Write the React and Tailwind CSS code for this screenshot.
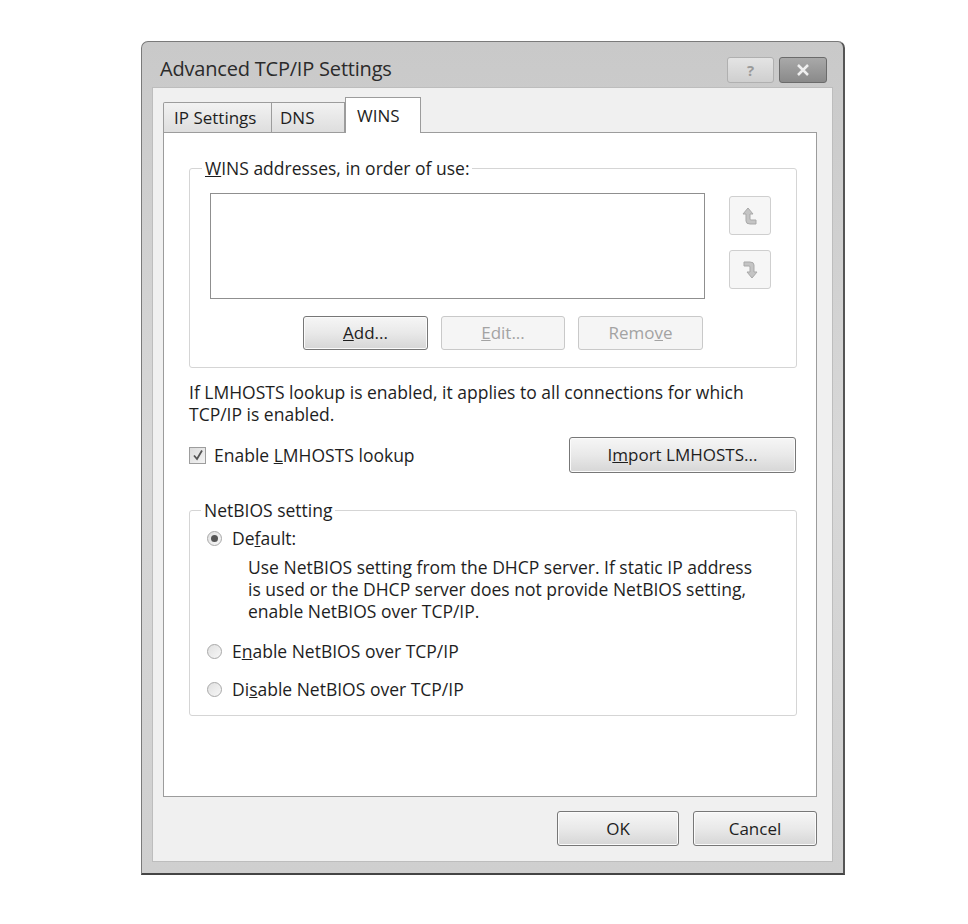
import React from 'react'

const font = { fontFamily: '"Open Sans", "Noto Sans", sans-serif' }

const Btn = ({ children, disabled, className = '' }) => (
  <div
    className={
      'flex items-center justify-center rounded-[3px] border text-[17px] ' +
      (disabled
        ? 'border-[#c9c9c9] bg-[#f5f5f5] text-[#a3a3a3] '
        : 'border-[#777] bg-gradient-to-b from-[#f6f6f6] via-[#e9e9e9] to-[#d6d6d6] text-[#1e1e1e] shadow-[inset_0_0_0_1px_#fbfbfb] ') +
      className
    }
  >
    {children}
  </div>
)

const ArrowBtn = ({ down }) => (
  <div className="w-[42px] h-[39px] rounded-[3px] border border-[#cfcfcf] bg-[#f6f6f6] flex items-center justify-center">
    <svg width="18" height="22" viewBox="0 0 18 22" className={down ? 'rotate-180' : ''}>
      <path d="M7 3 L2 9 H5 V16 Q5 19 9 19 H15 V15 H10 Q9 15 9 14 V9 H12 Z" fill="#c4c4c4" stroke="#a9a9a9" strokeWidth="1" />
    </svg>
  </div>
)

const Radio = ({ checked }) => (
  <div className="w-[15px] h-[15px] rounded-full border border-[#a8a8a8] bg-gradient-to-br from-[#e0e0e0] to-[#f7f7f7] flex items-center justify-center">
    {checked && <div className="w-[7px] h-[7px] rounded-full bg-[#555]" />}
  </div>
)

const App = () => {
  return (
    <div className="min-h-screen bg-white pt-[41px] pl-[141px]" style={font}>
      <div className="w-[704px] h-[834px] flex flex-col rounded-t-[7px] border border-[#7a7a7a] border-r-[2px] border-b-[2px] border-r-[#555] border-b-[#444] bg-gradient-to-b from-[#c9c9c9] via-[#d8d8d8] to-[#cfcfcf]">
        {/* Title bar */}
        <div className="h-[46px] flex items-start pl-[18px] pr-[16px]">
          <div className="flex-1 text-[20px] tracking-[-0.2px] text-[#2b2b2b] pt-[13px] leading-[28px]">Advanced TCP/IP Settings</div>
          <div className="flex gap-[5px] pt-[15px]">
            <div className="w-[47px] h-[26px] rounded-[3px] border border-[#b0b0b0] bg-gradient-to-b from-[#e4e4e4] to-[#cfcfcf] flex items-center justify-center text-[15px] font-bold text-[#9a9a9a]">?</div>
            <div className="w-[48px] h-[26px] rounded-[3px] border border-[#6b6b6b] bg-gradient-to-b from-[#a9a9a9] to-[#8a8a8a] flex items-center justify-center">
              <svg width="14" height="12" viewBox="0 0 14 12">
                <path d="M2 1 L12 11 M12 1 L2 11" stroke="#efefef" strokeWidth="2.5" />
              </svg>
            </div>
          </div>
        </div>

        {/* Client area */}
        <div className="flex-1 mx-[10px] mb-[11px] bg-[#f0f0f0] border border-[#bdbdbd] flex flex-col pl-[10px] pr-[15px] pt-[8px] pb-[15px]">
          {/* Tabs */}
          <div className="flex items-end h-[36px] text-[17px] text-[#1e1e1e]">
            <div className="h-[30px] w-[109px] border border-b-0 border-[#9c9c9c] bg-gradient-to-b from-[#f2f2f2] to-[#dedede] flex items-center pl-[10px] rounded-tl-[2px]">IP Settings</div>
            <div className="h-[30px] w-[73px] border border-l-0 border-b-0 border-[#9c9c9c] bg-gradient-to-b from-[#f2f2f2] to-[#dedede] flex items-center pl-[8px]">DNS</div>
            <div className="h-[36px] w-[76px] border border-b-0 border-[#9c9c9c] bg-white flex items-start pt-[5px] pl-[11px] -mb-px relative z-10">WINS</div>
          </div>

          {/* Tab panel */}
          <div className="h-[665px] bg-white border border-[#9c9c9c] pl-[25px] pr-[19px] pt-[23px] text-[17.5px] text-[#1e1e1e]">
            <fieldset className="border border-[#d5d5d5] rounded-[3px] px-[20px] h-[212px]">
              <legend className="px-[3px] ml-[-8px] leading-[24px]">
                <u>W</u>INS addresses, in order of use:
              </legend>
              <div className="flex pt-[13px]">
                <div className="flex flex-col">
                  <div className="w-[495px] h-[106px] border border-[#8f8f8f] bg-white" />
                  <div className="flex justify-end gap-[13px] mt-[17px] mr-[2px]">
                    <Btn className="w-[125px] h-[34px]"><span><u>A</u>dd...</span></Btn>
                    <Btn disabled className="w-[124px] h-[34px]"><span><u>E</u>dit...</span></Btn>
                    <Btn disabled className="w-[125px] h-[34px]"><span>Remo<u>v</u>e</span></Btn>
                  </div>
                </div>
                <div className="flex flex-col gap-[15px] ml-[24px] pt-[3px]">
                  <ArrowBtn />
                  <ArrowBtn down />
                </div>
              </div>
            </fieldset>

            <div className="mt-[13px] leading-[22px]">
              If LMHOSTS lookup is enabled, it applies to all connections for which
              <br />
              TCP/IP is enabled.
            </div>

            <div className="flex items-center mt-[12px]">
              <div className="w-[17px] h-[17px] border border-[#9d9d9d] bg-gradient-to-br from-[#dcdcdc] to-[#f3f3f3] flex items-center justify-center">
                <svg width="12" height="12" viewBox="0 0 12 12">
                  <path d="M2 6.5 L5 10 L10 1.5" stroke="#555" strokeWidth="1.8" fill="none" />
                </svg>
              </div>
              <div className="ml-[8px] flex-1">Enable <u>L</u>MHOSTS lookup</div>
              <Btn className="w-[227px] h-[36px] mr-[1px]"><span>I<u>m</u>port LMHOSTS...</span></Btn>
            </div>

            <fieldset className="mt-[25px] border border-[#d5d5d5] rounded-[3px] pl-[17px] pr-[20px] h-[218px]">
              <legend className="px-[3px] ml-[-6px] leading-[24px]">NetBIOS setting</legend>
              <div className="flex items-center h-[22px] mt-[5px]">
                <Radio checked />
                <span className="ml-[10px]">De<u>f</u>ault:</span>
              </div>
              <div className="pl-[41px] mt-[7px] leading-[22px]">
                Use NetBIOS setting from the DHCP server. If static IP address
                <br />
                is used or the DHCP server does not provide NetBIOS setting,
                <br />
                enable NetBIOS over TCP/IP.
              </div>
              <div className="flex items-center h-[22px] mt-[18px]">
                <Radio />
                <span className="ml-[10px]">E<u>n</u>able NetBIOS over TCP/IP</span>
              </div>
              <div className="flex items-center h-[22px] mt-[16px]">
                <Radio />
                <span className="ml-[10px]">Di<u>s</u>able NetBIOS over TCP/IP</span>
              </div>
            </fieldset>
          </div>

          {/* Bottom buttons */}
          <div className="flex justify-end gap-[14px] mt-[14px]">
            <Btn className="w-[122px] h-[35px]">OK</Btn>
            <Btn className="w-[124px] h-[35px]">Cancel</Btn>
          </div>
        </div>
      </div>
    </div>
  )
}

export default App
